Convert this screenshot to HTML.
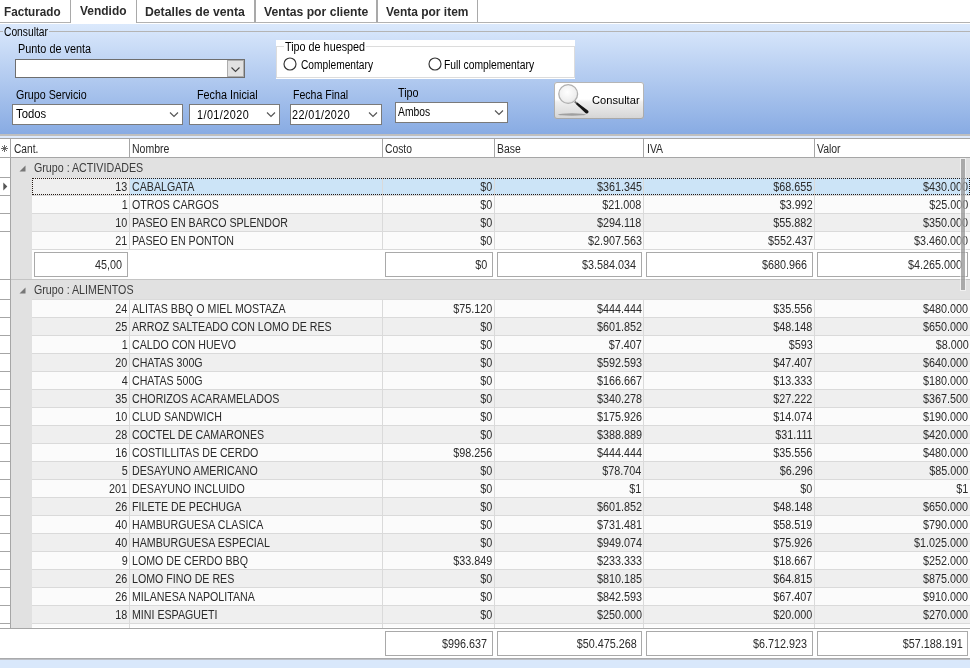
<!DOCTYPE html>
<html lang="es"><head><meta charset="utf-8"><title>Ventas - Vendido</title>
<style>
html,body{margin:0;padding:0;background:#fff;}
body{width:970px;height:668px;overflow:hidden;position:relative;font-family:"Liberation Sans", sans-serif;}
#app{position:absolute;left:0;top:0;width:970px;height:668px;overflow:hidden;background:#fff;}
#app div{position:absolute;}
#app svg{overflow:visible;}
#txt,#top{left:0;top:0;width:970px;height:668px;}
#txt{will-change:transform;}
.t{position:absolute;white-space:pre;line-height:14px;font-size:12px;display:inline-block;}
</style></head>
<body><div id="app">
<div id="tabs">
<div style="left:0px;top:22px;width:970px;height:1px;background:#b2b2b2"></div>
<div style="left:70px;top:0px;width:1px;height:22px;background:#a9a9a9"></div>
<div style="left:71px;top:22px;width:65px;height:2px;background:#fff"></div>
<div style="left:70px;top:0px;width:1px;height:23px;background:#a9a9a9"></div>
<div style="left:136px;top:0px;width:1px;height:23px;background:#a9a9a9"></div>
<div style="left:254px;top:0px;width:2px;height:22px;background:#a9a9a9"></div>
<div style="left:376px;top:0px;width:2px;height:22px;background:#a9a9a9"></div>
<div style="left:477px;top:0px;width:1px;height:22px;background:#a9a9a9"></div>
</div>
<div style="left:0px;top:24px;width:970px;height:110px;background:linear-gradient(#dbe9fc,#88abe3)"></div>
<div style="left:0px;top:134px;width:970px;height:2px;background:#bfbfbf"></div>
<div style="left:0px;top:136px;width:970px;height:2px;background:#dde9fb"></div>
<div style="left:0px;top:31px;width:3px;height:1px;background:#b4b4b4"></div>
<div style="left:49px;top:31px;width:921px;height:1px;background:#b4b4b4"></div>
<div style="left:15px;top:59px;width:230px;height:19px;background:#fff;border:1px solid #6e6e6e;box-sizing:border-box"></div>
<div style="left:227px;top:60px;width:17px;height:17px;background:#e1e1e1;border:1px solid #adadad;box-sizing:border-box"><svg width="15" height="15" viewBox="0 0 15 15" style="position:absolute;left:0;top:0"><path d="M3.5 6.5 L7.5 10.5 L11.5 6.5" fill="none" stroke="#404040" stroke-width="1.1"/></svg></div>
<div style="left:276px;top:40px;width:299px;height:39px;background:#fff"></div>
<div style="left:276px;top:46px;width:299px;height:32px;border:1px solid #dcdcdc;box-sizing:border-box"></div>
<div style="left:284px;top:41px;width:82px;height:12px;background:#fff"></div>
<svg style="position:absolute;left:282.3px;top:56.3px" width="16" height="16" viewBox="0 0 16 16"><circle cx="8" cy="8" r="6" fill="#fff" stroke="#333" stroke-width="1.15"/></svg>
<svg style="position:absolute;left:426.6px;top:56.400000000000006px" width="16" height="16" viewBox="0 0 16 16"><circle cx="8" cy="8" r="6" fill="#fff" stroke="#333" stroke-width="1.15"/></svg>
<div style="left:12px;top:104px;width:171px;height:21px;background:#fff;border:1px solid #7a7a7a;box-sizing:border-box"></div>
<svg style="position:absolute;left:167px;top:110px" width="14" height="9" viewBox="0 0 14 9"><path d="M3 2.5 L7 6.5 L11 2.5" fill="none" stroke="#555" stroke-width="1.15"/></svg>
<div style="left:189px;top:104px;width:91px;height:21px;background:#fff;border:1px solid #7a7a7a;box-sizing:border-box"></div>
<svg style="position:absolute;left:264px;top:110px" width="14" height="9" viewBox="0 0 14 9"><path d="M3 2.5 L7 6.5 L11 2.5" fill="none" stroke="#555" stroke-width="1.15"/></svg>
<div style="left:290px;top:104px;width:92px;height:21px;background:#fff;border:1px solid #7a7a7a;box-sizing:border-box"></div>
<svg style="position:absolute;left:366px;top:110px" width="14" height="9" viewBox="0 0 14 9"><path d="M3 2.5 L7 6.5 L11 2.5" fill="none" stroke="#555" stroke-width="1.15"/></svg>
<div style="left:395px;top:102px;width:113px;height:21px;background:#fff;border:1px solid #7a7a7a;box-sizing:border-box"></div>
<svg style="position:absolute;left:492px;top:108px" width="14" height="9" viewBox="0 0 14 9"><path d="M3 2.5 L7 6.5 L11 2.5" fill="none" stroke="#555" stroke-width="1.15"/></svg>
<div style="left:554px;top:82px;width:90px;height:37px;border-radius:3px;background:linear-gradient(#ffffff 0%,#ffffff 46%,#efefef 54%,#d4d4d4 100%);box-shadow:inset 0 0 0 1px rgba(150,150,150,.7)"></div>
<svg style="position:absolute;left:554px;top:82px" width="40" height="37" viewBox="0 0 40 37">
<defs><radialGradient id="lg" cx="0.45" cy="0.4" r="0.7"><stop offset="0" stop-color="#ffffff"/><stop offset="0.7" stop-color="#eeeeee"/><stop offset="1" stop-color="#d0d0d0"/></radialGradient></defs>
<ellipse cx="18" cy="32.5" rx="14" ry="1.2" fill="#6e6e6e" opacity=".55"/>
<path d="M20.8 19.6 L26 24.5" stroke="#6a6a6a" stroke-width="1.8" stroke-linecap="butt"/>
<path d="M23.2 20.5 L22 22.1 L31.4 30.9 Q33.2 32.2 34.3 30.7 Q35.1 29.3 33.6 28.3 Z" fill="#161616"/>
<circle cx="14.2" cy="12" r="9.4" fill="url(#lg)" stroke="#b0b0b0" stroke-width="1.3"/>
</svg>
<div style="left:0px;top:138px;width:970px;height:1px;background:#a6a6a6"></div>
<div style="left:0px;top:139px;width:970px;height:18px;background:#fff"></div>
<div style="left:0px;top:157px;width:970px;height:1px;background:#a6a6a6"></div>
<div style="left:10px;top:139px;width:1px;height:18px;background:#a6a6a6"></div>
<div style="left:129px;top:139px;width:1px;height:18px;background:#a6a6a6"></div>
<div style="left:382px;top:139px;width:1px;height:18px;background:#a6a6a6"></div>
<div style="left:494px;top:139px;width:1px;height:18px;background:#a6a6a6"></div>
<div style="left:643px;top:139px;width:1px;height:18px;background:#a6a6a6"></div>
<div style="left:814px;top:139px;width:1px;height:18px;background:#a6a6a6"></div>
<svg style="position:absolute;left:1px;top:145px" width="7" height="7" viewBox="0 0 7 7"><path d="M3.5 0 V7 M0 3.5 H7 M1 1 L6 6 M6 1 L1 6" stroke="#5a5a5a" stroke-width="0.9" fill="none"/></svg>
<div style="left:0px;top:158px;width:970px;height:470px;background:#fff"></div>
<div style="left:10px;top:158px;width:1px;height:470px;background:#a6a6a6"></div>
<div style="left:11px;top:158px;width:21px;height:470px;background:#e1e1e1"></div>
<div style="left:11px;top:158px;width:959px;height:20px;background:#e1e1e1"></div>
<svg style="position:absolute;left:18.5px;top:164.5px" width="7" height="7" viewBox="0 0 7 7"><path d="M6.5 0.5 L6.5 6.5 L0.5 6.5 Z" fill="#777"/></svg>
<div style="left:0px;top:177px;width:10px;height:1px;background:#a6a6a6"></div>
<div style="left:32px;top:178px;width:938px;height:17px;background:#efefef"></div>
<div style="left:130px;top:178px;width:840px;height:17px;background:#cce4f7"></div>
<div style="left:32px;top:195px;width:938px;height:1px;background:#dadada"></div>
<div style="left:129px;top:178px;width:1px;height:18px;background:#dadada"></div>
<div style="left:382px;top:178px;width:1px;height:18px;background:#dadada"></div>
<div style="left:494px;top:178px;width:1px;height:18px;background:#dadada"></div>
<div style="left:643px;top:178px;width:1px;height:18px;background:#dadada"></div>
<div style="left:814px;top:178px;width:1px;height:18px;background:#dadada"></div>
<div style="left:0px;top:195px;width:10px;height:1px;background:#a6a6a6"></div>
<div style="left:32px;top:178px;width:938px;height:17px;border:1px dotted #261a14;box-sizing:border-box"></div>
<div style="left:32px;top:196px;width:938px;height:17px;background:#fbfbfb"></div>
<div style="left:32px;top:213px;width:938px;height:1px;background:#dadada"></div>
<div style="left:129px;top:196px;width:1px;height:18px;background:#dadada"></div>
<div style="left:382px;top:196px;width:1px;height:18px;background:#dadada"></div>
<div style="left:494px;top:196px;width:1px;height:18px;background:#dadada"></div>
<div style="left:643px;top:196px;width:1px;height:18px;background:#dadada"></div>
<div style="left:814px;top:196px;width:1px;height:18px;background:#dadada"></div>
<div style="left:0px;top:213px;width:10px;height:1px;background:#a6a6a6"></div>
<div style="left:32px;top:214px;width:938px;height:17px;background:#efefef"></div>
<div style="left:32px;top:231px;width:938px;height:1px;background:#dadada"></div>
<div style="left:129px;top:214px;width:1px;height:18px;background:#dadada"></div>
<div style="left:382px;top:214px;width:1px;height:18px;background:#dadada"></div>
<div style="left:494px;top:214px;width:1px;height:18px;background:#dadada"></div>
<div style="left:643px;top:214px;width:1px;height:18px;background:#dadada"></div>
<div style="left:814px;top:214px;width:1px;height:18px;background:#dadada"></div>
<div style="left:0px;top:231px;width:10px;height:1px;background:#a6a6a6"></div>
<div style="left:32px;top:232px;width:938px;height:17px;background:#fbfbfb"></div>
<div style="left:32px;top:249px;width:938px;height:1px;background:#dadada"></div>
<div style="left:129px;top:232px;width:1px;height:18px;background:#dadada"></div>
<div style="left:382px;top:232px;width:1px;height:18px;background:#dadada"></div>
<div style="left:494px;top:232px;width:1px;height:18px;background:#dadada"></div>
<div style="left:643px;top:232px;width:1px;height:18px;background:#dadada"></div>
<div style="left:814px;top:232px;width:1px;height:18px;background:#dadada"></div>
<div style="left:0px;top:249px;width:10px;height:1px;background:#a6a6a6"></div>
<svg style="position:absolute;left:3px;top:182px" width="5" height="9" viewBox="0 0 5 9"><path d="M0.3 0.5 L4.3 4.5 L0.3 8.5 Z" fill="#555"/></svg>
<div style="left:32px;top:250px;width:938px;height:29px;background:#fff"></div>
<div style="left:11px;top:279px;width:959px;height:1px;background:#c4c4c4"></div>
<div style="left:0px;top:249px;width:10px;height:1px;background:#fff"></div>
<div style="left:0px;top:279px;width:10px;height:1px;background:#a6a6a6"></div>
<div style="left:34px;top:252px;width:94px;height:25px;background:#fff;border:1px solid #a9a9a9;box-sizing:border-box"></div>
<div style="left:385px;top:252px;width:108px;height:25px;background:#fff;border:1px solid #a9a9a9;box-sizing:border-box"></div>
<div style="left:497px;top:252px;width:145px;height:25px;background:#fff;border:1px solid #a9a9a9;box-sizing:border-box"></div>
<div style="left:646px;top:252px;width:167px;height:25px;background:#fff;border:1px solid #a9a9a9;box-sizing:border-box"></div>
<div style="left:817px;top:252px;width:151px;height:25px;background:#fff;border:1px solid #a9a9a9;box-sizing:border-box"></div>
<div style="left:11px;top:280px;width:959px;height:20px;background:#e1e1e1"></div>
<svg style="position:absolute;left:18.5px;top:286.5px" width="7" height="7" viewBox="0 0 7 7"><path d="M6.5 0.5 L6.5 6.5 L0.5 6.5 Z" fill="#777"/></svg>
<div style="left:0px;top:299px;width:10px;height:1px;background:#a6a6a6"></div>
<div style="left:32px;top:299px;width:938px;height:1px;background:#dadada"></div>
<div style="left:32px;top:300px;width:938px;height:17px;background:#fbfbfb"></div>
<div style="left:32px;top:317px;width:938px;height:1px;background:#dadada"></div>
<div style="left:129px;top:300px;width:1px;height:18px;background:#dadada"></div>
<div style="left:382px;top:300px;width:1px;height:18px;background:#dadada"></div>
<div style="left:494px;top:300px;width:1px;height:18px;background:#dadada"></div>
<div style="left:643px;top:300px;width:1px;height:18px;background:#dadada"></div>
<div style="left:814px;top:300px;width:1px;height:18px;background:#dadada"></div>
<div style="left:0px;top:317px;width:10px;height:1px;background:#a6a6a6"></div>
<div style="left:32px;top:318px;width:938px;height:17px;background:#efefef"></div>
<div style="left:32px;top:335px;width:938px;height:1px;background:#dadada"></div>
<div style="left:129px;top:318px;width:1px;height:18px;background:#dadada"></div>
<div style="left:382px;top:318px;width:1px;height:18px;background:#dadada"></div>
<div style="left:494px;top:318px;width:1px;height:18px;background:#dadada"></div>
<div style="left:643px;top:318px;width:1px;height:18px;background:#dadada"></div>
<div style="left:814px;top:318px;width:1px;height:18px;background:#dadada"></div>
<div style="left:0px;top:335px;width:10px;height:1px;background:#a6a6a6"></div>
<div style="left:32px;top:336px;width:938px;height:17px;background:#fbfbfb"></div>
<div style="left:32px;top:353px;width:938px;height:1px;background:#dadada"></div>
<div style="left:129px;top:336px;width:1px;height:18px;background:#dadada"></div>
<div style="left:382px;top:336px;width:1px;height:18px;background:#dadada"></div>
<div style="left:494px;top:336px;width:1px;height:18px;background:#dadada"></div>
<div style="left:643px;top:336px;width:1px;height:18px;background:#dadada"></div>
<div style="left:814px;top:336px;width:1px;height:18px;background:#dadada"></div>
<div style="left:0px;top:353px;width:10px;height:1px;background:#a6a6a6"></div>
<div style="left:32px;top:354px;width:938px;height:17px;background:#efefef"></div>
<div style="left:32px;top:371px;width:938px;height:1px;background:#dadada"></div>
<div style="left:129px;top:354px;width:1px;height:18px;background:#dadada"></div>
<div style="left:382px;top:354px;width:1px;height:18px;background:#dadada"></div>
<div style="left:494px;top:354px;width:1px;height:18px;background:#dadada"></div>
<div style="left:643px;top:354px;width:1px;height:18px;background:#dadada"></div>
<div style="left:814px;top:354px;width:1px;height:18px;background:#dadada"></div>
<div style="left:0px;top:371px;width:10px;height:1px;background:#a6a6a6"></div>
<div style="left:32px;top:372px;width:938px;height:17px;background:#fbfbfb"></div>
<div style="left:32px;top:389px;width:938px;height:1px;background:#dadada"></div>
<div style="left:129px;top:372px;width:1px;height:18px;background:#dadada"></div>
<div style="left:382px;top:372px;width:1px;height:18px;background:#dadada"></div>
<div style="left:494px;top:372px;width:1px;height:18px;background:#dadada"></div>
<div style="left:643px;top:372px;width:1px;height:18px;background:#dadada"></div>
<div style="left:814px;top:372px;width:1px;height:18px;background:#dadada"></div>
<div style="left:0px;top:389px;width:10px;height:1px;background:#a6a6a6"></div>
<div style="left:32px;top:390px;width:938px;height:17px;background:#efefef"></div>
<div style="left:32px;top:407px;width:938px;height:1px;background:#dadada"></div>
<div style="left:129px;top:390px;width:1px;height:18px;background:#dadada"></div>
<div style="left:382px;top:390px;width:1px;height:18px;background:#dadada"></div>
<div style="left:494px;top:390px;width:1px;height:18px;background:#dadada"></div>
<div style="left:643px;top:390px;width:1px;height:18px;background:#dadada"></div>
<div style="left:814px;top:390px;width:1px;height:18px;background:#dadada"></div>
<div style="left:0px;top:407px;width:10px;height:1px;background:#a6a6a6"></div>
<div style="left:32px;top:408px;width:938px;height:17px;background:#fbfbfb"></div>
<div style="left:32px;top:425px;width:938px;height:1px;background:#dadada"></div>
<div style="left:129px;top:408px;width:1px;height:18px;background:#dadada"></div>
<div style="left:382px;top:408px;width:1px;height:18px;background:#dadada"></div>
<div style="left:494px;top:408px;width:1px;height:18px;background:#dadada"></div>
<div style="left:643px;top:408px;width:1px;height:18px;background:#dadada"></div>
<div style="left:814px;top:408px;width:1px;height:18px;background:#dadada"></div>
<div style="left:0px;top:425px;width:10px;height:1px;background:#a6a6a6"></div>
<div style="left:32px;top:426px;width:938px;height:17px;background:#efefef"></div>
<div style="left:32px;top:443px;width:938px;height:1px;background:#dadada"></div>
<div style="left:129px;top:426px;width:1px;height:18px;background:#dadada"></div>
<div style="left:382px;top:426px;width:1px;height:18px;background:#dadada"></div>
<div style="left:494px;top:426px;width:1px;height:18px;background:#dadada"></div>
<div style="left:643px;top:426px;width:1px;height:18px;background:#dadada"></div>
<div style="left:814px;top:426px;width:1px;height:18px;background:#dadada"></div>
<div style="left:0px;top:443px;width:10px;height:1px;background:#a6a6a6"></div>
<div style="left:32px;top:444px;width:938px;height:17px;background:#fbfbfb"></div>
<div style="left:32px;top:461px;width:938px;height:1px;background:#dadada"></div>
<div style="left:129px;top:444px;width:1px;height:18px;background:#dadada"></div>
<div style="left:382px;top:444px;width:1px;height:18px;background:#dadada"></div>
<div style="left:494px;top:444px;width:1px;height:18px;background:#dadada"></div>
<div style="left:643px;top:444px;width:1px;height:18px;background:#dadada"></div>
<div style="left:814px;top:444px;width:1px;height:18px;background:#dadada"></div>
<div style="left:0px;top:461px;width:10px;height:1px;background:#a6a6a6"></div>
<div style="left:32px;top:462px;width:938px;height:17px;background:#efefef"></div>
<div style="left:32px;top:479px;width:938px;height:1px;background:#dadada"></div>
<div style="left:129px;top:462px;width:1px;height:18px;background:#dadada"></div>
<div style="left:382px;top:462px;width:1px;height:18px;background:#dadada"></div>
<div style="left:494px;top:462px;width:1px;height:18px;background:#dadada"></div>
<div style="left:643px;top:462px;width:1px;height:18px;background:#dadada"></div>
<div style="left:814px;top:462px;width:1px;height:18px;background:#dadada"></div>
<div style="left:0px;top:479px;width:10px;height:1px;background:#a6a6a6"></div>
<div style="left:32px;top:480px;width:938px;height:17px;background:#fbfbfb"></div>
<div style="left:32px;top:497px;width:938px;height:1px;background:#dadada"></div>
<div style="left:129px;top:480px;width:1px;height:18px;background:#dadada"></div>
<div style="left:382px;top:480px;width:1px;height:18px;background:#dadada"></div>
<div style="left:494px;top:480px;width:1px;height:18px;background:#dadada"></div>
<div style="left:643px;top:480px;width:1px;height:18px;background:#dadada"></div>
<div style="left:814px;top:480px;width:1px;height:18px;background:#dadada"></div>
<div style="left:0px;top:497px;width:10px;height:1px;background:#a6a6a6"></div>
<div style="left:32px;top:498px;width:938px;height:17px;background:#efefef"></div>
<div style="left:32px;top:515px;width:938px;height:1px;background:#dadada"></div>
<div style="left:129px;top:498px;width:1px;height:18px;background:#dadada"></div>
<div style="left:382px;top:498px;width:1px;height:18px;background:#dadada"></div>
<div style="left:494px;top:498px;width:1px;height:18px;background:#dadada"></div>
<div style="left:643px;top:498px;width:1px;height:18px;background:#dadada"></div>
<div style="left:814px;top:498px;width:1px;height:18px;background:#dadada"></div>
<div style="left:0px;top:515px;width:10px;height:1px;background:#a6a6a6"></div>
<div style="left:32px;top:516px;width:938px;height:17px;background:#fbfbfb"></div>
<div style="left:32px;top:533px;width:938px;height:1px;background:#dadada"></div>
<div style="left:129px;top:516px;width:1px;height:18px;background:#dadada"></div>
<div style="left:382px;top:516px;width:1px;height:18px;background:#dadada"></div>
<div style="left:494px;top:516px;width:1px;height:18px;background:#dadada"></div>
<div style="left:643px;top:516px;width:1px;height:18px;background:#dadada"></div>
<div style="left:814px;top:516px;width:1px;height:18px;background:#dadada"></div>
<div style="left:0px;top:533px;width:10px;height:1px;background:#a6a6a6"></div>
<div style="left:32px;top:534px;width:938px;height:17px;background:#efefef"></div>
<div style="left:32px;top:551px;width:938px;height:1px;background:#dadada"></div>
<div style="left:129px;top:534px;width:1px;height:18px;background:#dadada"></div>
<div style="left:382px;top:534px;width:1px;height:18px;background:#dadada"></div>
<div style="left:494px;top:534px;width:1px;height:18px;background:#dadada"></div>
<div style="left:643px;top:534px;width:1px;height:18px;background:#dadada"></div>
<div style="left:814px;top:534px;width:1px;height:18px;background:#dadada"></div>
<div style="left:0px;top:551px;width:10px;height:1px;background:#a6a6a6"></div>
<div style="left:32px;top:552px;width:938px;height:17px;background:#fbfbfb"></div>
<div style="left:32px;top:569px;width:938px;height:1px;background:#dadada"></div>
<div style="left:129px;top:552px;width:1px;height:18px;background:#dadada"></div>
<div style="left:382px;top:552px;width:1px;height:18px;background:#dadada"></div>
<div style="left:494px;top:552px;width:1px;height:18px;background:#dadada"></div>
<div style="left:643px;top:552px;width:1px;height:18px;background:#dadada"></div>
<div style="left:814px;top:552px;width:1px;height:18px;background:#dadada"></div>
<div style="left:0px;top:569px;width:10px;height:1px;background:#a6a6a6"></div>
<div style="left:32px;top:570px;width:938px;height:17px;background:#efefef"></div>
<div style="left:32px;top:587px;width:938px;height:1px;background:#dadada"></div>
<div style="left:129px;top:570px;width:1px;height:18px;background:#dadada"></div>
<div style="left:382px;top:570px;width:1px;height:18px;background:#dadada"></div>
<div style="left:494px;top:570px;width:1px;height:18px;background:#dadada"></div>
<div style="left:643px;top:570px;width:1px;height:18px;background:#dadada"></div>
<div style="left:814px;top:570px;width:1px;height:18px;background:#dadada"></div>
<div style="left:0px;top:587px;width:10px;height:1px;background:#a6a6a6"></div>
<div style="left:32px;top:588px;width:938px;height:17px;background:#fbfbfb"></div>
<div style="left:32px;top:605px;width:938px;height:1px;background:#dadada"></div>
<div style="left:129px;top:588px;width:1px;height:18px;background:#dadada"></div>
<div style="left:382px;top:588px;width:1px;height:18px;background:#dadada"></div>
<div style="left:494px;top:588px;width:1px;height:18px;background:#dadada"></div>
<div style="left:643px;top:588px;width:1px;height:18px;background:#dadada"></div>
<div style="left:814px;top:588px;width:1px;height:18px;background:#dadada"></div>
<div style="left:0px;top:605px;width:10px;height:1px;background:#a6a6a6"></div>
<div style="left:32px;top:606px;width:938px;height:17px;background:#efefef"></div>
<div style="left:32px;top:623px;width:938px;height:1px;background:#dadada"></div>
<div style="left:129px;top:606px;width:1px;height:18px;background:#dadada"></div>
<div style="left:382px;top:606px;width:1px;height:18px;background:#dadada"></div>
<div style="left:494px;top:606px;width:1px;height:18px;background:#dadada"></div>
<div style="left:643px;top:606px;width:1px;height:18px;background:#dadada"></div>
<div style="left:814px;top:606px;width:1px;height:18px;background:#dadada"></div>
<div style="left:0px;top:623px;width:10px;height:1px;background:#a6a6a6"></div>
<div style="left:32px;top:624px;width:938px;height:3px;background:#fbfbfb"></div>
<div style="left:129px;top:624px;width:1px;height:4px;background:#dadada"></div>
<div style="left:382px;top:624px;width:1px;height:4px;background:#dadada"></div>
<div style="left:494px;top:624px;width:1px;height:4px;background:#dadada"></div>
<div style="left:643px;top:624px;width:1px;height:4px;background:#dadada"></div>
<div style="left:814px;top:624px;width:1px;height:4px;background:#dadada"></div>
<div style="left:0px;top:628px;width:970px;height:1px;background:#a6a6a6"></div>
<div style="left:0px;top:629px;width:970px;height:29px;background:#fff"></div>
<div style="left:385px;top:631px;width:108px;height:25px;background:#fff;border:1px solid #a9a9a9;box-sizing:border-box"></div>
<div style="left:497px;top:631px;width:145px;height:25px;background:#fff;border:1px solid #a9a9a9;box-sizing:border-box"></div>
<div style="left:646px;top:631px;width:167px;height:25px;background:#fff;border:1px solid #a9a9a9;box-sizing:border-box"></div>
<div style="left:817px;top:631px;width:151px;height:25px;background:#fff;border:1px solid #a9a9a9;box-sizing:border-box"></div>
<div style="left:0px;top:658px;width:970px;height:2px;background:linear-gradient(#a0a0a0,#c4c8d0)"></div>
<div style="left:0px;top:660px;width:970px;height:8px;background:#d9e8fb"></div>
<div id="txt">
<span class="t" style="top:5px;color:#2b2b2b;font-size:13px;font-weight:700;left:4.2px;transform:scaleX(0.9);transform-origin:0 0;">Facturado</span>
<span class="t" style="top:4px;color:#2b2b2b;font-size:13px;font-weight:700;left:79.5px;transform:scaleX(0.92);transform-origin:0 0;">Vendido</span>
<span class="t" style="top:5px;color:#2b2b2b;font-size:13px;font-weight:700;left:145.3px;transform:scaleX(0.94);transform-origin:0 0;">Detalles de venta</span>
<span class="t" style="top:5px;color:#2b2b2b;font-size:13px;font-weight:700;left:264px;transform:scaleX(0.937);transform-origin:0 0;">Ventas por cliente</span>
<span class="t" style="top:5px;color:#2b2b2b;font-size:13px;font-weight:700;left:386px;transform:scaleX(0.92);transform-origin:0 0;">Venta por item</span>
<span class="t" style="top:25px;color:#000;left:4.3px;transform:scaleX(0.855);transform-origin:0 0;">Consultar</span>
<span class="t" style="top:42px;color:#000;left:17.8px;transform:scaleX(0.905);transform-origin:0 0;">Punto de venta</span>
<span class="t" style="top:40px;color:#000;left:285px;transform:scaleX(0.9);transform-origin:0 0;">Tipo de huesped</span>
<span class="t" style="top:58px;color:#000;left:300.5px;transform:scaleX(0.85);transform-origin:0 0;">Complementary</span>
<span class="t" style="top:58px;color:#000;left:444px;transform:scaleX(0.86);transform-origin:0 0;">Full complementary</span>
<span class="t" style="top:88px;color:#000;left:16.4px;transform:scaleX(0.89);transform-origin:0 0;">Grupo Servicio</span>
<span class="t" style="top:88px;color:#000;left:197.3px;transform:scaleX(0.9);transform-origin:0 0;">Fecha Inicial</span>
<span class="t" style="top:88px;color:#000;left:293.3px;transform:scaleX(0.88);transform-origin:0 0;">Fecha Final</span>
<span class="t" style="top:86px;color:#000;left:398px;transform:scaleX(0.9);transform-origin:0 0;">Tipo</span>
<span class="t" style="top:107px;color:#000;left:15.5px;transform:scaleX(0.94);transform-origin:0 0;">Todos</span>
<span class="t" style="top:108px;color:#000;left:197.2px;transform:scaleX(0.9);transform-origin:0 0;letter-spacing:0.5px;">1/01/2020</span>
<span class="t" style="top:108px;color:#000;left:292.2px;transform:scaleX(0.9);transform-origin:0 0;letter-spacing:0.45px;">22/01/2020</span>
<span class="t" style="top:105px;color:#000;left:398px;transform:scaleX(0.86);transform-origin:0 0;">Ambos</span>
<span class="t" style="top:93px;color:#000;font-size:11.5px;left:591.8px;transform:scaleX(0.967);transform-origin:0 0;">Consultar</span>
<span class="t" style="top:142px;color:#2a2a2a;left:13.9px;transform:scaleX(0.85);transform-origin:0 0;">Cant.</span>
<span class="t" style="top:142px;color:#2a2a2a;left:132px;transform:scaleX(0.876);transform-origin:0 0;">Nombre</span>
<span class="t" style="top:142px;color:#2a2a2a;left:385.2px;transform:scaleX(0.86);transform-origin:0 0;">Costo</span>
<span class="t" style="top:142px;color:#2a2a2a;left:497.2px;transform:scaleX(0.87);transform-origin:0 0;">Base</span>
<span class="t" style="top:142px;color:#2a2a2a;left:646.5px;transform:scaleX(0.87);transform-origin:0 0;">IVA</span>
<span class="t" style="top:142px;color:#2a2a2a;left:817.2px;transform:scaleX(0.87);transform-origin:0 0;">Valor</span>
<span class="t" style="top:161px;color:#3c3c3c;left:34.3px;transform:scaleX(0.89);transform-origin:0 0;">Grupo : ACTIVIDADES</span>
<span class="t" style="top:180px;color:#2a2a2a;right:842.5px;transform:scaleX(0.9);transform-origin:100% 0;">13</span>
<span class="t" style="top:180px;color:#2a2a2a;left:132.3px;transform:scaleX(0.887);transform-origin:0 0;">CABALGATA</span>
<span class="t" style="top:180px;color:#2a2a2a;right:477.4px;transform:scaleX(0.9);transform-origin:100% 0;">$0</span>
<span class="t" style="top:180px;color:#2a2a2a;right:328.4px;transform:scaleX(0.9);transform-origin:100% 0;">$361.345</span>
<span class="t" style="top:180px;color:#2a2a2a;right:157.39999999999998px;transform:scaleX(0.9);transform-origin:100% 0;">$68.655</span>
<span class="t" style="top:180px;color:#2a2a2a;right:1.5px;transform:scaleX(0.9);transform-origin:100% 0;">$430.000</span>
<span class="t" style="top:198px;color:#2a2a2a;right:842.5px;transform:scaleX(0.9);transform-origin:100% 0;">1</span>
<span class="t" style="top:198px;color:#2a2a2a;left:132.3px;transform:scaleX(0.887);transform-origin:0 0;">OTROS CARGOS</span>
<span class="t" style="top:198px;color:#2a2a2a;right:477.4px;transform:scaleX(0.9);transform-origin:100% 0;">$0</span>
<span class="t" style="top:198px;color:#2a2a2a;right:328.4px;transform:scaleX(0.9);transform-origin:100% 0;">$21.008</span>
<span class="t" style="top:198px;color:#2a2a2a;right:157.39999999999998px;transform:scaleX(0.9);transform-origin:100% 0;">$3.992</span>
<span class="t" style="top:198px;color:#2a2a2a;right:1.5px;transform:scaleX(0.9);transform-origin:100% 0;">$25.000</span>
<span class="t" style="top:216px;color:#2a2a2a;right:842.5px;transform:scaleX(0.9);transform-origin:100% 0;">10</span>
<span class="t" style="top:216px;color:#2a2a2a;left:132.3px;transform:scaleX(0.887);transform-origin:0 0;">PASEO EN BARCO SPLENDOR</span>
<span class="t" style="top:216px;color:#2a2a2a;right:477.4px;transform:scaleX(0.9);transform-origin:100% 0;">$0</span>
<span class="t" style="top:216px;color:#2a2a2a;right:328.4px;transform:scaleX(0.9);transform-origin:100% 0;">$294.118</span>
<span class="t" style="top:216px;color:#2a2a2a;right:157.39999999999998px;transform:scaleX(0.9);transform-origin:100% 0;">$55.882</span>
<span class="t" style="top:216px;color:#2a2a2a;right:1.5px;transform:scaleX(0.9);transform-origin:100% 0;">$350.000</span>
<span class="t" style="top:234px;color:#2a2a2a;right:842.5px;transform:scaleX(0.9);transform-origin:100% 0;">21</span>
<span class="t" style="top:234px;color:#2a2a2a;left:132.3px;transform:scaleX(0.887);transform-origin:0 0;">PASEO EN PONTON</span>
<span class="t" style="top:234px;color:#2a2a2a;right:477.4px;transform:scaleX(0.9);transform-origin:100% 0;">$0</span>
<span class="t" style="top:234px;color:#2a2a2a;right:328.4px;transform:scaleX(0.9);transform-origin:100% 0;">$2.907.563</span>
<span class="t" style="top:234px;color:#2a2a2a;right:157.39999999999998px;transform:scaleX(0.9);transform-origin:100% 0;">$552.437</span>
<span class="t" style="top:234px;color:#2a2a2a;right:1.5px;transform:scaleX(0.9);transform-origin:100% 0;">$3.460.000</span>
<span class="t" style="top:258px;color:#2a2a2a;right:847.5px;transform:scaleX(0.9);transform-origin:100% 0;">45,00</span>
<span class="t" style="top:258px;color:#2a2a2a;right:482.5px;transform:scaleX(0.9);transform-origin:100% 0;">$0</span>
<span class="t" style="top:258px;color:#2a2a2a;right:333.5px;transform:scaleX(0.9);transform-origin:100% 0;">$3.584.034</span>
<span class="t" style="top:258px;color:#2a2a2a;right:162.5px;transform:scaleX(0.9);transform-origin:100% 0;">$680.966</span>
<span class="t" style="top:258px;color:#2a2a2a;right:7.5px;transform:scaleX(0.9);transform-origin:100% 0;">$4.265.000</span>
<span class="t" style="top:283px;color:#3c3c3c;left:34.3px;transform:scaleX(0.89);transform-origin:0 0;">Grupo : ALIMENTOS</span>
<span class="t" style="top:302px;color:#2a2a2a;right:842.5px;transform:scaleX(0.9);transform-origin:100% 0;">24</span>
<span class="t" style="top:302px;color:#2a2a2a;left:132.3px;transform:scaleX(0.887);transform-origin:0 0;">ALITAS BBQ O MIEL MOSTAZA</span>
<span class="t" style="top:302px;color:#2a2a2a;right:477.4px;transform:scaleX(0.9);transform-origin:100% 0;">$75.120</span>
<span class="t" style="top:302px;color:#2a2a2a;right:328.4px;transform:scaleX(0.9);transform-origin:100% 0;">$444.444</span>
<span class="t" style="top:302px;color:#2a2a2a;right:157.39999999999998px;transform:scaleX(0.9);transform-origin:100% 0;">$35.556</span>
<span class="t" style="top:302px;color:#2a2a2a;right:1.5px;transform:scaleX(0.9);transform-origin:100% 0;">$480.000</span>
<span class="t" style="top:320px;color:#2a2a2a;right:842.5px;transform:scaleX(0.9);transform-origin:100% 0;">25</span>
<span class="t" style="top:320px;color:#2a2a2a;left:132.3px;transform:scaleX(0.887);transform-origin:0 0;">ARROZ SALTEADO CON LOMO DE RES</span>
<span class="t" style="top:320px;color:#2a2a2a;right:477.4px;transform:scaleX(0.9);transform-origin:100% 0;">$0</span>
<span class="t" style="top:320px;color:#2a2a2a;right:328.4px;transform:scaleX(0.9);transform-origin:100% 0;">$601.852</span>
<span class="t" style="top:320px;color:#2a2a2a;right:157.39999999999998px;transform:scaleX(0.9);transform-origin:100% 0;">$48.148</span>
<span class="t" style="top:320px;color:#2a2a2a;right:1.5px;transform:scaleX(0.9);transform-origin:100% 0;">$650.000</span>
<span class="t" style="top:338px;color:#2a2a2a;right:842.5px;transform:scaleX(0.9);transform-origin:100% 0;">1</span>
<span class="t" style="top:338px;color:#2a2a2a;left:132.3px;transform:scaleX(0.887);transform-origin:0 0;">CALDO CON HUEVO</span>
<span class="t" style="top:338px;color:#2a2a2a;right:477.4px;transform:scaleX(0.9);transform-origin:100% 0;">$0</span>
<span class="t" style="top:338px;color:#2a2a2a;right:328.4px;transform:scaleX(0.9);transform-origin:100% 0;">$7.407</span>
<span class="t" style="top:338px;color:#2a2a2a;right:157.39999999999998px;transform:scaleX(0.9);transform-origin:100% 0;">$593</span>
<span class="t" style="top:338px;color:#2a2a2a;right:1.5px;transform:scaleX(0.9);transform-origin:100% 0;">$8.000</span>
<span class="t" style="top:356px;color:#2a2a2a;right:842.5px;transform:scaleX(0.9);transform-origin:100% 0;">20</span>
<span class="t" style="top:356px;color:#2a2a2a;left:132.3px;transform:scaleX(0.887);transform-origin:0 0;">CHATAS 300G</span>
<span class="t" style="top:356px;color:#2a2a2a;right:477.4px;transform:scaleX(0.9);transform-origin:100% 0;">$0</span>
<span class="t" style="top:356px;color:#2a2a2a;right:328.4px;transform:scaleX(0.9);transform-origin:100% 0;">$592.593</span>
<span class="t" style="top:356px;color:#2a2a2a;right:157.39999999999998px;transform:scaleX(0.9);transform-origin:100% 0;">$47.407</span>
<span class="t" style="top:356px;color:#2a2a2a;right:1.5px;transform:scaleX(0.9);transform-origin:100% 0;">$640.000</span>
<span class="t" style="top:374px;color:#2a2a2a;right:842.5px;transform:scaleX(0.9);transform-origin:100% 0;">4</span>
<span class="t" style="top:374px;color:#2a2a2a;left:132.3px;transform:scaleX(0.887);transform-origin:0 0;">CHATAS 500G</span>
<span class="t" style="top:374px;color:#2a2a2a;right:477.4px;transform:scaleX(0.9);transform-origin:100% 0;">$0</span>
<span class="t" style="top:374px;color:#2a2a2a;right:328.4px;transform:scaleX(0.9);transform-origin:100% 0;">$166.667</span>
<span class="t" style="top:374px;color:#2a2a2a;right:157.39999999999998px;transform:scaleX(0.9);transform-origin:100% 0;">$13.333</span>
<span class="t" style="top:374px;color:#2a2a2a;right:1.5px;transform:scaleX(0.9);transform-origin:100% 0;">$180.000</span>
<span class="t" style="top:392px;color:#2a2a2a;right:842.5px;transform:scaleX(0.9);transform-origin:100% 0;">35</span>
<span class="t" style="top:392px;color:#2a2a2a;left:132.3px;transform:scaleX(0.887);transform-origin:0 0;">CHORIZOS ACARAMELADOS</span>
<span class="t" style="top:392px;color:#2a2a2a;right:477.4px;transform:scaleX(0.9);transform-origin:100% 0;">$0</span>
<span class="t" style="top:392px;color:#2a2a2a;right:328.4px;transform:scaleX(0.9);transform-origin:100% 0;">$340.278</span>
<span class="t" style="top:392px;color:#2a2a2a;right:157.39999999999998px;transform:scaleX(0.9);transform-origin:100% 0;">$27.222</span>
<span class="t" style="top:392px;color:#2a2a2a;right:1.5px;transform:scaleX(0.9);transform-origin:100% 0;">$367.500</span>
<span class="t" style="top:410px;color:#2a2a2a;right:842.5px;transform:scaleX(0.9);transform-origin:100% 0;">10</span>
<span class="t" style="top:410px;color:#2a2a2a;left:132.3px;transform:scaleX(0.887);transform-origin:0 0;">CLUD SANDWICH</span>
<span class="t" style="top:410px;color:#2a2a2a;right:477.4px;transform:scaleX(0.9);transform-origin:100% 0;">$0</span>
<span class="t" style="top:410px;color:#2a2a2a;right:328.4px;transform:scaleX(0.9);transform-origin:100% 0;">$175.926</span>
<span class="t" style="top:410px;color:#2a2a2a;right:157.39999999999998px;transform:scaleX(0.9);transform-origin:100% 0;">$14.074</span>
<span class="t" style="top:410px;color:#2a2a2a;right:1.5px;transform:scaleX(0.9);transform-origin:100% 0;">$190.000</span>
<span class="t" style="top:428px;color:#2a2a2a;right:842.5px;transform:scaleX(0.9);transform-origin:100% 0;">28</span>
<span class="t" style="top:428px;color:#2a2a2a;left:132.3px;transform:scaleX(0.887);transform-origin:0 0;">COCTEL DE CAMARONES</span>
<span class="t" style="top:428px;color:#2a2a2a;right:477.4px;transform:scaleX(0.9);transform-origin:100% 0;">$0</span>
<span class="t" style="top:428px;color:#2a2a2a;right:328.4px;transform:scaleX(0.9);transform-origin:100% 0;">$388.889</span>
<span class="t" style="top:428px;color:#2a2a2a;right:157.39999999999998px;transform:scaleX(0.9);transform-origin:100% 0;">$31.111</span>
<span class="t" style="top:428px;color:#2a2a2a;right:1.5px;transform:scaleX(0.9);transform-origin:100% 0;">$420.000</span>
<span class="t" style="top:446px;color:#2a2a2a;right:842.5px;transform:scaleX(0.9);transform-origin:100% 0;">16</span>
<span class="t" style="top:446px;color:#2a2a2a;left:132.3px;transform:scaleX(0.887);transform-origin:0 0;">COSTILLITAS DE CERDO</span>
<span class="t" style="top:446px;color:#2a2a2a;right:477.4px;transform:scaleX(0.9);transform-origin:100% 0;">$98.256</span>
<span class="t" style="top:446px;color:#2a2a2a;right:328.4px;transform:scaleX(0.9);transform-origin:100% 0;">$444.444</span>
<span class="t" style="top:446px;color:#2a2a2a;right:157.39999999999998px;transform:scaleX(0.9);transform-origin:100% 0;">$35.556</span>
<span class="t" style="top:446px;color:#2a2a2a;right:1.5px;transform:scaleX(0.9);transform-origin:100% 0;">$480.000</span>
<span class="t" style="top:464px;color:#2a2a2a;right:842.5px;transform:scaleX(0.9);transform-origin:100% 0;">5</span>
<span class="t" style="top:464px;color:#2a2a2a;left:132.3px;transform:scaleX(0.887);transform-origin:0 0;">DESAYUNO AMERICANO</span>
<span class="t" style="top:464px;color:#2a2a2a;right:477.4px;transform:scaleX(0.9);transform-origin:100% 0;">$0</span>
<span class="t" style="top:464px;color:#2a2a2a;right:328.4px;transform:scaleX(0.9);transform-origin:100% 0;">$78.704</span>
<span class="t" style="top:464px;color:#2a2a2a;right:157.39999999999998px;transform:scaleX(0.9);transform-origin:100% 0;">$6.296</span>
<span class="t" style="top:464px;color:#2a2a2a;right:1.5px;transform:scaleX(0.9);transform-origin:100% 0;">$85.000</span>
<span class="t" style="top:482px;color:#2a2a2a;right:842.5px;transform:scaleX(0.9);transform-origin:100% 0;">201</span>
<span class="t" style="top:482px;color:#2a2a2a;left:132.3px;transform:scaleX(0.887);transform-origin:0 0;">DESAYUNO INCLUIDO</span>
<span class="t" style="top:482px;color:#2a2a2a;right:477.4px;transform:scaleX(0.9);transform-origin:100% 0;">$0</span>
<span class="t" style="top:482px;color:#2a2a2a;right:328.4px;transform:scaleX(0.9);transform-origin:100% 0;">$1</span>
<span class="t" style="top:482px;color:#2a2a2a;right:157.39999999999998px;transform:scaleX(0.9);transform-origin:100% 0;">$0</span>
<span class="t" style="top:482px;color:#2a2a2a;right:1.5px;transform:scaleX(0.9);transform-origin:100% 0;">$1</span>
<span class="t" style="top:500px;color:#2a2a2a;right:842.5px;transform:scaleX(0.9);transform-origin:100% 0;">26</span>
<span class="t" style="top:500px;color:#2a2a2a;left:132.3px;transform:scaleX(0.887);transform-origin:0 0;">FILETE DE PECHUGA</span>
<span class="t" style="top:500px;color:#2a2a2a;right:477.4px;transform:scaleX(0.9);transform-origin:100% 0;">$0</span>
<span class="t" style="top:500px;color:#2a2a2a;right:328.4px;transform:scaleX(0.9);transform-origin:100% 0;">$601.852</span>
<span class="t" style="top:500px;color:#2a2a2a;right:157.39999999999998px;transform:scaleX(0.9);transform-origin:100% 0;">$48.148</span>
<span class="t" style="top:500px;color:#2a2a2a;right:1.5px;transform:scaleX(0.9);transform-origin:100% 0;">$650.000</span>
<span class="t" style="top:518px;color:#2a2a2a;right:842.5px;transform:scaleX(0.9);transform-origin:100% 0;">40</span>
<span class="t" style="top:518px;color:#2a2a2a;left:132.3px;transform:scaleX(0.887);transform-origin:0 0;">HAMBURGUESA CLASICA</span>
<span class="t" style="top:518px;color:#2a2a2a;right:477.4px;transform:scaleX(0.9);transform-origin:100% 0;">$0</span>
<span class="t" style="top:518px;color:#2a2a2a;right:328.4px;transform:scaleX(0.9);transform-origin:100% 0;">$731.481</span>
<span class="t" style="top:518px;color:#2a2a2a;right:157.39999999999998px;transform:scaleX(0.9);transform-origin:100% 0;">$58.519</span>
<span class="t" style="top:518px;color:#2a2a2a;right:1.5px;transform:scaleX(0.9);transform-origin:100% 0;">$790.000</span>
<span class="t" style="top:536px;color:#2a2a2a;right:842.5px;transform:scaleX(0.9);transform-origin:100% 0;">40</span>
<span class="t" style="top:536px;color:#2a2a2a;left:132.3px;transform:scaleX(0.887);transform-origin:0 0;">HAMBURGUESA ESPECIAL</span>
<span class="t" style="top:536px;color:#2a2a2a;right:477.4px;transform:scaleX(0.9);transform-origin:100% 0;">$0</span>
<span class="t" style="top:536px;color:#2a2a2a;right:328.4px;transform:scaleX(0.9);transform-origin:100% 0;">$949.074</span>
<span class="t" style="top:536px;color:#2a2a2a;right:157.39999999999998px;transform:scaleX(0.9);transform-origin:100% 0;">$75.926</span>
<span class="t" style="top:536px;color:#2a2a2a;right:1.5px;transform:scaleX(0.9);transform-origin:100% 0;">$1.025.000</span>
<span class="t" style="top:554px;color:#2a2a2a;right:842.5px;transform:scaleX(0.9);transform-origin:100% 0;">9</span>
<span class="t" style="top:554px;color:#2a2a2a;left:132.3px;transform:scaleX(0.887);transform-origin:0 0;">LOMO DE CERDO BBQ</span>
<span class="t" style="top:554px;color:#2a2a2a;right:477.4px;transform:scaleX(0.9);transform-origin:100% 0;">$33.849</span>
<span class="t" style="top:554px;color:#2a2a2a;right:328.4px;transform:scaleX(0.9);transform-origin:100% 0;">$233.333</span>
<span class="t" style="top:554px;color:#2a2a2a;right:157.39999999999998px;transform:scaleX(0.9);transform-origin:100% 0;">$18.667</span>
<span class="t" style="top:554px;color:#2a2a2a;right:1.5px;transform:scaleX(0.9);transform-origin:100% 0;">$252.000</span>
<span class="t" style="top:572px;color:#2a2a2a;right:842.5px;transform:scaleX(0.9);transform-origin:100% 0;">26</span>
<span class="t" style="top:572px;color:#2a2a2a;left:132.3px;transform:scaleX(0.887);transform-origin:0 0;">LOMO FINO DE RES</span>
<span class="t" style="top:572px;color:#2a2a2a;right:477.4px;transform:scaleX(0.9);transform-origin:100% 0;">$0</span>
<span class="t" style="top:572px;color:#2a2a2a;right:328.4px;transform:scaleX(0.9);transform-origin:100% 0;">$810.185</span>
<span class="t" style="top:572px;color:#2a2a2a;right:157.39999999999998px;transform:scaleX(0.9);transform-origin:100% 0;">$64.815</span>
<span class="t" style="top:572px;color:#2a2a2a;right:1.5px;transform:scaleX(0.9);transform-origin:100% 0;">$875.000</span>
<span class="t" style="top:590px;color:#2a2a2a;right:842.5px;transform:scaleX(0.9);transform-origin:100% 0;">26</span>
<span class="t" style="top:590px;color:#2a2a2a;left:132.3px;transform:scaleX(0.887);transform-origin:0 0;">MILANESA NAPOLITANA</span>
<span class="t" style="top:590px;color:#2a2a2a;right:477.4px;transform:scaleX(0.9);transform-origin:100% 0;">$0</span>
<span class="t" style="top:590px;color:#2a2a2a;right:328.4px;transform:scaleX(0.9);transform-origin:100% 0;">$842.593</span>
<span class="t" style="top:590px;color:#2a2a2a;right:157.39999999999998px;transform:scaleX(0.9);transform-origin:100% 0;">$67.407</span>
<span class="t" style="top:590px;color:#2a2a2a;right:1.5px;transform:scaleX(0.9);transform-origin:100% 0;">$910.000</span>
<span class="t" style="top:608px;color:#2a2a2a;right:842.5px;transform:scaleX(0.9);transform-origin:100% 0;">18</span>
<span class="t" style="top:608px;color:#2a2a2a;left:132.3px;transform:scaleX(0.887);transform-origin:0 0;">MINI ESPAGUETI</span>
<span class="t" style="top:608px;color:#2a2a2a;right:477.4px;transform:scaleX(0.9);transform-origin:100% 0;">$0</span>
<span class="t" style="top:608px;color:#2a2a2a;right:328.4px;transform:scaleX(0.9);transform-origin:100% 0;">$250.000</span>
<span class="t" style="top:608px;color:#2a2a2a;right:157.39999999999998px;transform:scaleX(0.9);transform-origin:100% 0;">$20.000</span>
<span class="t" style="top:608px;color:#2a2a2a;right:1.5px;transform:scaleX(0.9);transform-origin:100% 0;">$270.000</span>
<span class="t" style="top:637px;color:#2a2a2a;right:482.5px;transform:scaleX(0.9);transform-origin:100% 0;">$996.637</span>
<span class="t" style="top:637px;color:#2a2a2a;right:333.5px;transform:scaleX(0.9);transform-origin:100% 0;">$50.475.268</span>
<span class="t" style="top:637px;color:#2a2a2a;right:162.5px;transform:scaleX(0.9);transform-origin:100% 0;">$6.712.923</span>
<span class="t" style="top:637px;color:#2a2a2a;right:7.5px;transform:scaleX(0.9);transform-origin:100% 0;">$57.188.191</span>
</div>
<div id="top">
<div style="left:960px;top:158px;width:6px;height:133px;background:rgba(255,255,255,.5)"></div>
<div style="left:961px;top:159px;width:4px;height:131px;background:rgba(125,125,125,.62)"></div>
</div>
</div></body></html>
